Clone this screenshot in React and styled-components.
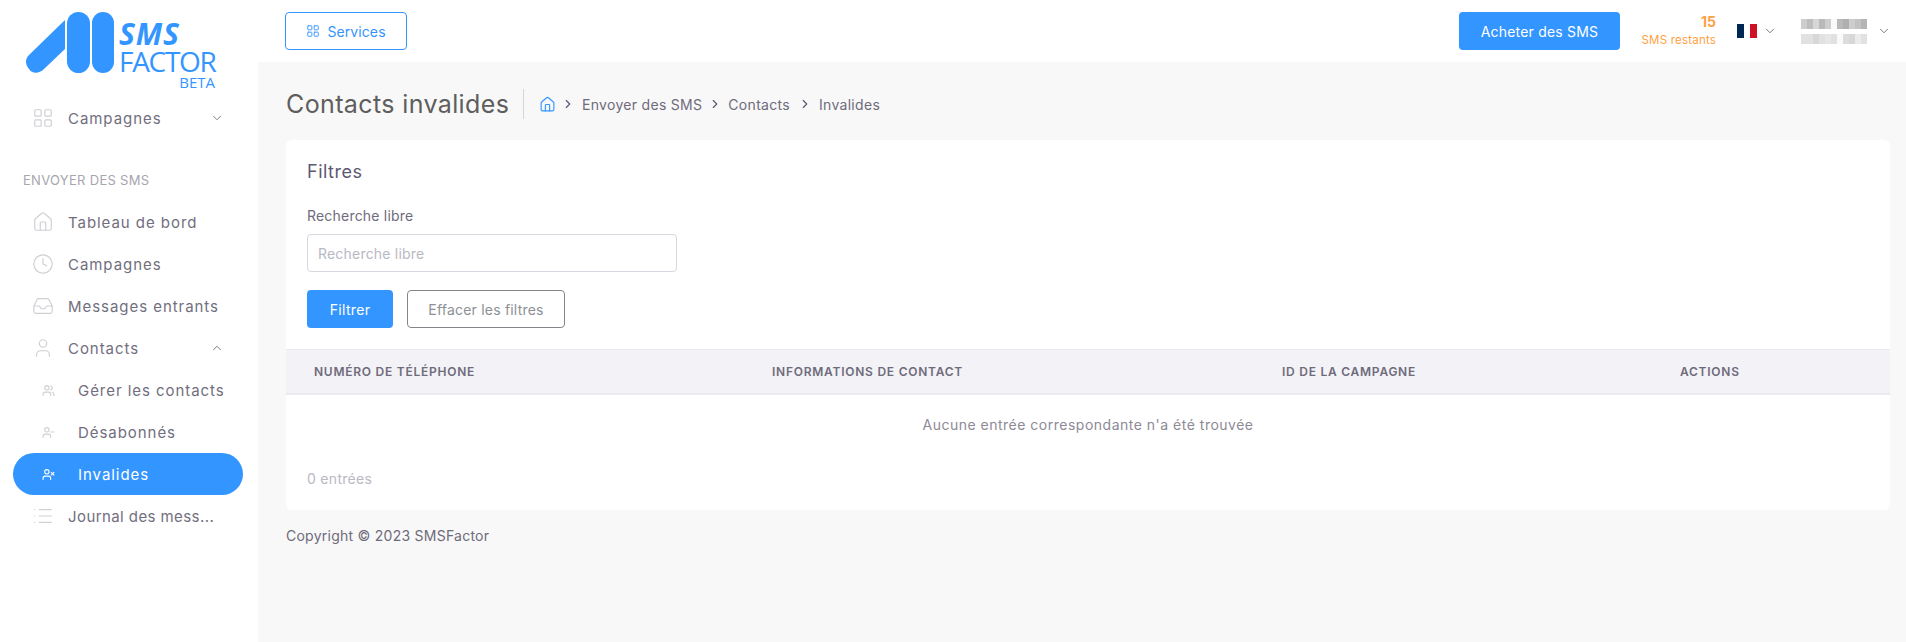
import React from "react";
import styled, { createGlobalStyle } from "styled-components";
import {
  LayoutGrid,
  Home,
  Clock,
  Inbox,
  User,
  Users,
  UserMinus,
  UserX,
  List,
  ChevronDown,
  ChevronUp,
  ChevronRight,
} from "lucide-react";

const primary = "#3395ff";

const GlobalStyle = createGlobalStyle`
  * { box-sizing: border-box; }
  html, body { margin: 0; padding: 0; background: #f8f8f8; }
  body { font-family: "Inter", "Liberation Sans", sans-serif; color: #6e6b7b; }
`;

const Layout = styled.div`
  display: flex;
  min-height: 642px;
`;

const Sidebar = styled.aside`
  width: 258px;
  flex: none;
  background: #fff;
`;

const LogoBlock = styled.div`
  height: 97px;
  display: flex;
  padding: 12px 0 0 26px;
  gap: 5px;
`;

const LogoWords = styled.div`
  display: flex;
  flex-direction: column;
  font-family: "Open Sans", "Liberation Sans", sans-serif;
  color: ${primary};
  width: 98px;
  padding-top: 6px;
`;

const LogoSms = styled.span`
  font-size: 30px;
  line-height: 31px;
  font-weight: 700;
  font-style: italic;
  letter-spacing: 0.8px;
`;

const LogoFactor = styled.span`
  font-size: 28px;
  line-height: 24px;
  letter-spacing: -1.3px;
`;

const LogoBeta = styled.span`
  font-size: 15px;
  line-height: 18px;
  font-weight: 500;
  align-self: flex-end;
  margin-right: 2px;
`;

const NavRow = styled.div`
  height: 42px;
  margin: 0 15px 0 13px;
  padding-left: ${(p) => (p.$sub ? 29 : 19)}px;
  display: flex;
  align-items: center;
  border-radius: 21px;
  font-size: 15px;
  letter-spacing: 0.95px;
  color: ${(p) => (p.$active ? "#fff" : "#716e7e")};
  background: ${(p) => (p.$active ? primary : "transparent")};
`;

const NavIcon = styled.span`
  width: 36px;
  flex: none;
  display: flex;
  color: ${(p) => (p.$active ? "#fff" : "#cfd0d4")};
`;

const NavText = styled.span`
  flex: 1;
  white-space: nowrap;
  letter-spacing: ${(p) => (p.$tight ? "0.42px" : "inherit")};
`;

const NavChevron = styled.span`
  display: flex;
  margin-right: 19px;
  color: #6e6b7b;
`;

const SectionLabel = styled.div`
  padding: 31px 0 11px 23px;
  font-size: 13px;
  line-height: 20px;
  letter-spacing: 0.3px;
  color: #a8a5b0;
`;

const Column = styled.div`
  flex: 1;
  min-width: 0;
  display: flex;
  flex-direction: column;
`;

const TopBar = styled.header`
  height: 62px;
  background: #fff;
  display: flex;
  align-items: center;
  padding: 0 15px 0 27px;
`;

const ServicesButton = styled.button`
  width: 122px;
  height: 38px;
  display: flex;
  align-items: center;
  justify-content: center;
  gap: 7px;
  background: #fff;
  border: 1px solid ${primary};
  border-radius: 4px;
  color: ${primary};
  font: inherit;
  font-size: 14px;
  letter-spacing: 0.1px;
`;

const BuyButton = styled.button`
  width: 161px;
  height: 38px;
  margin-left: auto;
  border: none;
  border-radius: 4px;
  background: ${primary};
  color: #fff;
  font: inherit;
  font-size: 14px;
  letter-spacing: 0.2px;
`;

const Credit = styled.div`
  width: 96px;
  display: flex;
  flex-direction: column;
  align-items: flex-end;
  color: #ff9f43;
`;

const CreditCount = styled.strong`
  font-size: 14px;
  line-height: 18px;
  font-weight: 700;
`;

const CreditLabel = styled.span`
  font-size: 11.5px;
  line-height: 18px;
  letter-spacing: 0.2px;
  white-space: nowrap;
`;

const Flag = styled.div`
  width: 20px;
  height: 14px;
  margin-left: 21px;
  display: flex;
`;

const FlagBand = styled.span`
  flex: 1;
  background: ${(p) => p.$color};
`;

const TopChevron = styled.span`
  display: flex;
  color: #6e6b7b;
  margin-left: ${(p) => p.$gap}px;
`;

const BlurName = styled.div`
  display: flex;
  flex-direction: column;
  gap: 5px;
  margin-left: 24px;
  align-items: flex-end;
`;

const BlurLine = styled.div`
  display: flex;
`;

const BlurCell = styled.span`
  width: 6px;
  height: 10px;
  background: rgb(${(p) => p.$v}, ${(p) => p.$v}, ${(p) => p.$v});
`;

const Content = styled.main`
  padding: 27px 16px 0 28px;
`;

const TitleRow = styled.div`
  height: 30px;
  margin-bottom: 21px;
  display: flex;
  align-items: center;
`;

const PageTitle = styled.h1`
  margin: 0;
  width: 238px;
  height: 30px;
  line-height: 30px;
  font-size: 25px;
  font-weight: 400;
  letter-spacing: 0.38px;
  color: #5e5e5e;
  border-right: 1px solid #d6d6d8;
`;

const Crumbs = styled.nav`
  display: flex;
  align-items: center;
  padding-left: 15px;
  font-size: 14px;
  letter-spacing: 0.3px;
  color: #6e6b7b;
`;

const CrumbHome = styled.span`
  display: flex;
  color: ${primary};
`;

const CrumbSep = styled.span`
  display: flex;
  margin: 0 ${(p) => p.$right}px 0 ${(p) => p.$left}px;
  color: #5e5873;
`;

const Card = styled.section`
  background: #fff;
  border-radius: 6px;
  height: 370px;
  padding-top: 21px;
`;

const CardBody = styled.div`
  padding: 0 21px;
`;

const CardTitle = styled.h4`
  margin: 0 0 23px;
  font-size: 18px;
  line-height: 22px;
  font-weight: 400;
  letter-spacing: 0.5px;
  color: #5e5873;
`;

const FieldLabel = styled.label`
  display: block;
  font-size: 14px;
  line-height: 20px;
  letter-spacing: 0.2px;
  margin-bottom: 8px;
`;

const SearchInput = styled.input`
  display: block;
  width: 370px;
  height: 38px;
  padding: 0 10px;
  border: 1px solid #d8d6de;
  border-radius: 4px;
  font: inherit;
  font-size: 14px;
  letter-spacing: 0.2px;
  outline: none;
  &::placeholder { color: #b9b9c3; opacity: 1; }
`;

const Actions = styled.div`
  display: flex;
  gap: 14px;
  margin-top: 18px;
`;

const FilterButton = styled.button`
  width: ${(p) => (p.$outline ? 158 : 86)}px;
  height: 38px;
  border-radius: 4px;
  font: inherit;
  font-size: 14px;
  letter-spacing: ${(p) => (p.$outline ? "0.2px" : "0.3px")};
  border: ${(p) => (p.$outline ? "1px solid #82868b" : "none")};
  background: ${(p) => (p.$outline ? "#fff" : primary)};
  color: ${(p) => (p.$outline ? "#8d9095" : "#fff")};
`;

const TableHead = styled.div`
  margin-top: 21px;
  height: 46px;
  display: grid;
  grid-template-columns: 458px 510px 398px 1fr;
  align-items: center;
  background: #f3f2f7;
  border-top: 1px solid #ebe9f1;
  border-bottom: 2px solid #ebe9f1;
`;

const HeadCell = styled.div`
  padding-left: 28px;
  font-size: 12px;
  font-weight: 600;
  letter-spacing: 0.75px;
  text-transform: uppercase;
  color: #6e6b7b;
`;

const EmptyRow = styled.div`
  height: 60px;
  margin-top: -1px;
  display: flex;
  align-items: center;
  justify-content: center;
  font-size: 14px;
  letter-spacing: 0.5px;
  color: #8d8a96;
`;

const Count = styled.div`
  margin-top: 15px;
  padding-left: 21px;
  font-size: 14px;
  line-height: 20px;
  letter-spacing: 0.3px;
  color: #b9b9c3;
`;

const Footer = styled.footer`
  margin-top: 16px;
  font-size: 14px;
  line-height: 20px;
  letter-spacing: 0.25px;
`;

const LogoMark = () => (
  <svg width="88" height="62" viewBox="0 0 88 62" fill={primary}>
    <path d="M39 8 L39 37 L18 57 C13 62 6 62 3 57 C-1 52 -1 47 3 43 Z" />
    <rect x="41" y="0" width="23" height="61" rx="11.5" />
    <rect x="66" y="0" width="22" height="61" rx="11" />
  </svg>
);

const Blurred = ({ cells }) => (
  <BlurLine>
    {cells.map((v, i) => (
      <BlurCell key={i} $v={v} />
    ))}
  </BlurLine>
);

const nav = [
  { label: "Tableau de bord", Icon: Home },
  { label: "Campagnes", Icon: Clock },
  { label: "Messages entrants", Icon: Inbox },
  { label: "Contacts", Icon: User, chevron: ChevronUp },
  { label: "Gérer les contacts", Icon: Users, sub: true },
  { label: "Désabonnés", Icon: UserMinus, sub: true },
  { label: "Invalides", Icon: UserX, sub: true, active: true },
  { label: "Journal des mess...", Icon: List, tight: true },
];

const Row = ({ label, Icon, chevron: Chev, sub, active, tight }) => (
  <NavRow $sub={sub} $active={active}>
    <NavIcon $active={active}>
      <Icon size={sub ? 13 : 22} strokeWidth={sub ? 2 : 1.3} />
    </NavIcon>
    <NavText $tight={tight}>{label}</NavText>
    {Chev && (
      <NavChevron>
        <Chev size={14} strokeWidth={1.5} />
      </NavChevron>
    )}
  </NavRow>
);

const App = () => (
  <Layout>
    <GlobalStyle />
    <Sidebar>
      <LogoBlock>
        <LogoMark />
        <LogoWords>
          <LogoSms>SMS</LogoSms>
          <LogoFactor>FACTOR</LogoFactor>
          <LogoBeta>BETA</LogoBeta>
        </LogoWords>
      </LogoBlock>
      <Row label="Campagnes" Icon={LayoutGrid} chevron={ChevronDown} />
      <SectionLabel>ENVOYER DES SMS</SectionLabel>
      {nav.map((item) => (
        <Row key={item.label} {...item} />
      ))}
    </Sidebar>
    <Column>
      <TopBar>
        <ServicesButton>
          <LayoutGrid size={14} strokeWidth={1.6} />
          Services
        </ServicesButton>
        <BuyButton>Acheter des SMS</BuyButton>
        <Credit>
          <CreditCount>15</CreditCount>
          <CreditLabel>SMS restants</CreditLabel>
        </Credit>
        <Flag>
          <FlagBand $color="#002654" />
          <FlagBand $color="#fff" />
          <FlagBand $color="#ce1126" />
        </Flag>
        <TopChevron $gap={6}>
          <ChevronDown size={14} strokeWidth={1.6} />
        </TopChevron>
        <BlurName>
          <Blurred cells={[205, 190, 215, 185, 205, 250, 185, 175, 205, 195, 180]} />
          <Blurred cells={[225, 225, 215, 225, 230, 225, 250, 220, 215, 235, 225]} />
        </BlurName>
        <TopChevron $gap={10}>
          <ChevronDown size={14} strokeWidth={1.6} />
        </TopChevron>
      </TopBar>
      <Content>
        <TitleRow>
          <PageTitle>Contacts invalides</PageTitle>
          <Crumbs>
            <CrumbHome>
              <Home size={17} strokeWidth={1.6} />
            </CrumbHome>
            <CrumbSep $left={5} $right={7}>
              <ChevronRight size={14} strokeWidth={2} />
            </CrumbSep>
            Envoyer des SMS
            <CrumbSep $left={6} $right={6}>
              <ChevronRight size={14} strokeWidth={2} />
            </CrumbSep>
            Contacts
            <CrumbSep $left={8} $right={7}>
              <ChevronRight size={14} strokeWidth={2} />
            </CrumbSep>
            Invalides
          </Crumbs>
        </TitleRow>
        <Card>
          <CardBody>
            <CardTitle>Filtres</CardTitle>
            <FieldLabel>Recherche libre</FieldLabel>
            <SearchInput placeholder="Recherche libre" />
            <Actions>
              <FilterButton>Filtrer</FilterButton>
              <FilterButton $outline>Effacer les filtres</FilterButton>
            </Actions>
          </CardBody>
          <TableHead>
            <HeadCell>Numéro de téléphone</HeadCell>
            <HeadCell>Informations de contact</HeadCell>
            <HeadCell>ID de la campagne</HeadCell>
            <HeadCell>Actions</HeadCell>
          </TableHead>
          <EmptyRow>Aucune entrée correspondante n'a été trouvée</EmptyRow>
          <Count>0 entrées</Count>
        </Card>
        <Footer>Copyright © 2023 SMSFactor</Footer>
      </Content>
    </Column>
  </Layout>
);

export default App;
